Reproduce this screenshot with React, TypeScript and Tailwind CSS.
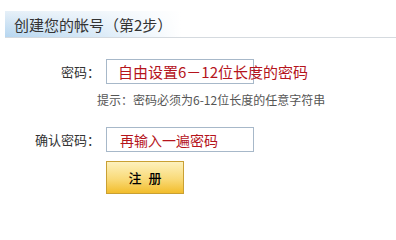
export default function App() {
  return (
    <div className="h-[212px] w-[396px] overflow-hidden bg-white font-['Noto_Sans_CJK_SC','Noto_Sans',sans-serif] text-[#333]">
      <div className="ml-[5px] mt-[11px] flex h-[27px] items-center border-b border-[#d5dadf] bg-[linear-gradient(to_right,rgba(255,255,255,0)_0%,rgba(255,255,255,0.5)_25%,#fff_45%),linear-gradient(#e6f0f8,#b6d6f0)] pl-[9px] text-[15px] leading-none text-[#333]">
        创建您的帐号（第2步）
      </div>

      <div className="mt-[21px] flex items-center">
        <div className="w-[100px] text-right text-[13px] leading-none">密码：</div>
        <div className="ml-[6px] flex h-[25px] w-[148px] items-center border border-[#a7b8c9] pl-[11px]">
          <span className="whitespace-nowrap text-[15px] leading-none text-[#b5141c]">
            自由设置6－12位长度的密码
          </span>
        </div>
      </div>

      <div className="mt-[8px] flex h-[16px] items-center pl-[97px] text-[12px] leading-none whitespace-nowrap text-[#555]">
        提示：密码必须为6-12位长度的任意字符串
      </div>

      <div className="mt-[19px] flex items-center">
        <div className="w-[100px] text-right text-[13px] leading-none">确认密码：</div>
        <div className="ml-[6px] flex h-[25px] w-[148px] items-center border border-[#a7b8c9] pl-[13px]">
          <span className="whitespace-nowrap text-[14px] leading-none text-[#b5141c]">
            再输入一遍密码
          </span>
        </div>
      </div>

      <div className="mt-[9px] pl-[106px]">
        <button className="flex h-[33px] w-[78px] items-center justify-center gap-[7px] border border-[#c9a033] bg-[linear-gradient(#fdf1bd,#f9da78_55%,#f2bd2c)] text-[13px] font-medium leading-none text-black">
          <span>注</span>
          <span>册</span>
        </button>
      </div>
    </div>
  );
}
